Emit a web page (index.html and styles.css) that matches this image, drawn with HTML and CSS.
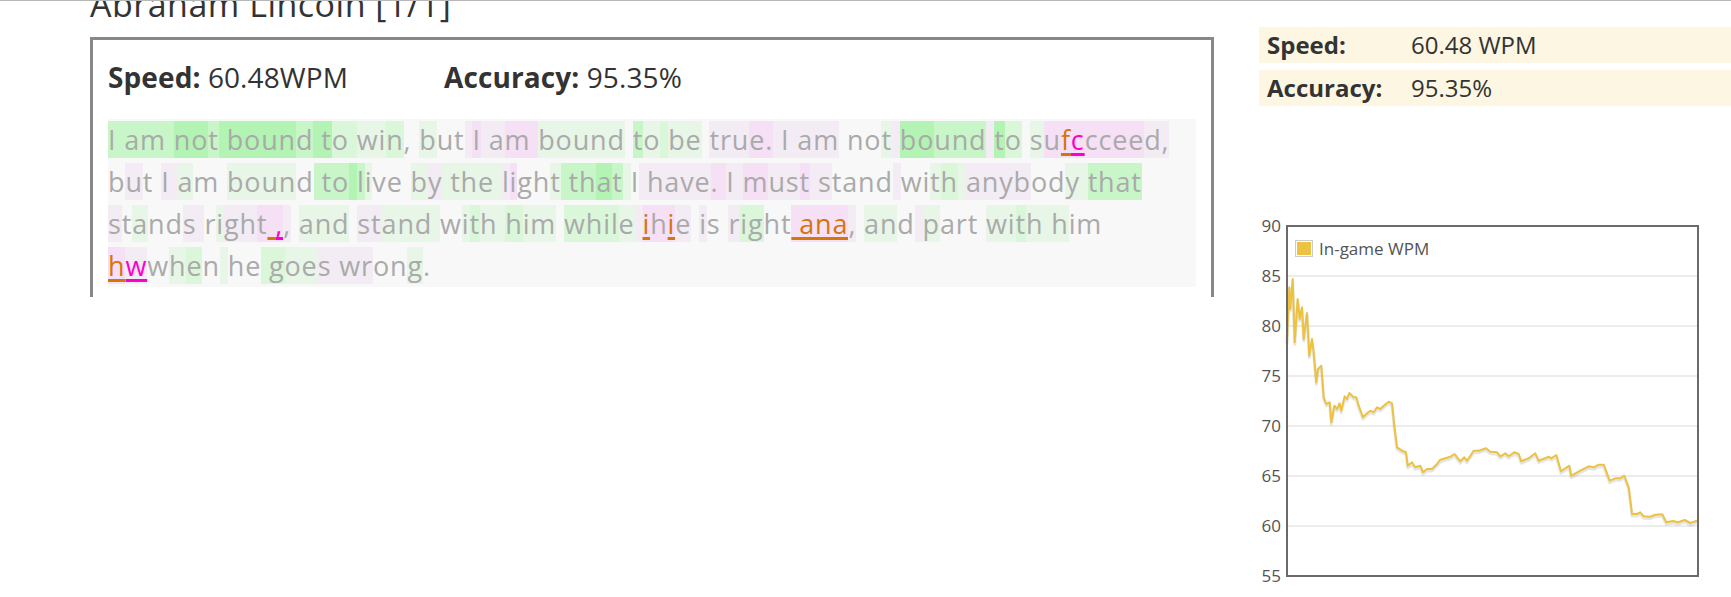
FILE: index.html
```html
<!DOCTYPE html>
<html>
<head>
<meta charset="utf-8">
<link rel="stylesheet" href="styles.css">
</head>
<body>
<div class="page">
  <div class="main">
    <h1 class="title">Abraham Lincoln [1/1]</h1>
    <div class="box">
      <div class="stats">
        <div class="stat stat-speed"><b>Speed:</b> 60.48WPM</div>
        <div class="stat"><b>Accuracy:</b> 95.35%</div>
      </div>
      <div class="passage"><span class="b">I am </span><span class="a">no</span><span class="b">t</span><span class="a"> boun</span><span class="b">d</span><span class="a"> t</span><span class="c">o </span><span class="d">wi</span><span class="c">n</span>, <span class="d">b</span>ut<span class="q"> </span><span class="p">I</span><span class="q"> a</span><span class="p">m </span><span class="d">bound</span> <span class="b">t</span><span class="d">o</span><span class="c"> </span><span class="d">be</span> <span class="q">tru</span><span class="p">e.</span><span class="q"> I am</span> no<span class="d">t</span><span class="q"> </span><span class="a">bo</span><span class="b">und</span><span class="q"> </span><span class="a">t</span><span class="c">o</span> <span class="d">s</span><span class="p">u</span><span class="p e1">f</span><span class="p e2">c</span><span class="p">ccee</span><span class="q">d,</span><br>b<span class="q">u</span>t <span class="q">I </span><span class="d">a</span>m <span class="d">boun</span>d<span class="b"> to</span><span class="a"> </span><span class="b">l</span><span class="d">i</span>ve <span class="d">b</span><span class="q">y</span><span class="d"> the </span><span class="q">l</span><span class="p">i</span>gh<span class="d">t</span><span class="b"> th</span><span class="a">a</span><span class="b">t</span><span class="d"> </span>I<span class="q"> have</span><span class="p">. </span><span class="q">I </span><span class="p">m</span><span class="q">us</span><span class="p">t</span><span class="q"> s</span>tand<span class="q"> </span>wi<span class="d">t</span><span class="c">h</span><span class="d"> </span><span class="q">anyb</span>od<span class="d">y </span><span class="b">that</span><br><span class="q">s</span>t<span class="d">a</span>nd<span class="q">s </span>r<span class="d">i</span><span class="q">gh</span><span class="p">t</span><span class="p e1"> </span><span class="p e2">,</span><span class="q">,</span> <span class="d">and</span> <span class="q">st</span><span class="d">and </span>w<span class="d">i</span><span class="c">t</span><span class="d">h </span><span class="c">h</span><span class="d">im</span> <span class="c">whil</span><span class="d">e</span><span class="q"> </span><span class="p e1">i</span><span class="p">h</span><span class="p e1">i</span><span class="q">e</span> <span class="q">i</span>s <span class="q">r</span><span class="c">ig</span>ht<span class="p e1"> ana</span><span class="q">,</span> <span class="d">an</span>d<span class="q"> </span><span class="d">p</span>art <span class="d">wi</span><span class="c">t</span><span class="d">h h</span>im<br><span class="p e1">h</span><span class="q e2">w</span>w<span class="d">h</span><span class="c">e</span>n<span class="d"> </span>he<span class="c"> g</span><span class="d">oe</span><span class="q">s wr</span>on<span class="d">g</span>.</div>
    </div>
  </div>
  <div class="side">
    <div class="row"><span class="lbl">Speed:</span><span class="val">60.48 WPM</span></div>
    <div class="row"><span class="lbl">Accuracy:</span><span class="val">95.35%</span></div>
    <svg class="chart" width="472" height="376" viewBox="0 0 472 376">
      <g class="grid">
        <line x1="28" y1="62" x2="439" y2="62"/>
        <line x1="28" y1="112" x2="439" y2="112"/>
        <line x1="28" y1="162" x2="439" y2="162"/>
        <line x1="28" y1="212" x2="439" y2="212"/>
        <line x1="28" y1="262" x2="439" y2="262"/>
        <line x1="28" y1="312" x2="439" y2="312"/>
      </g>
      <g class="ticks">
        <text x="22" y="18">90</text>
        <text x="22" y="68">85</text>
        <text x="22" y="118">80</text>
        <text x="22" y="168">75</text>
        <text x="22" y="218">70</text>
        <text x="22" y="268">65</text>
        <text x="22" y="318">60</text>
        <text x="22" y="368">55</text>
      </g>
      <g transform="translate(28,12)">
        <path class="shadow" transform="translate(0,2)" d="M0,116.3 L2.3,61.3 L3.3,83 L5.7,53 L7.7,116.3 L10.7,73 L12.7,93 L15,81.3 L16.7,113 L20,87 L22.3,129.7 L25,113 L26.7,126.3 L29.3,156.3 L31,143 L34.3,139.7 L36.7,171.3 L39.3,178 L42.7,176.3 L44.3,196.3 L47.3,179.7 L50,183 L52.7,177.3 L54.3,184.7 L57.7,170.3 L60,173 L62.3,167 L66.7,171.3 L69.3,171.3 L71.7,179.7 L76,191.3 L80,187.3 L83.3,184.7 L86.7,186.3 L90,181.3 L93.3,183 L96.7,179.7 L101.7,175.7 L105,177.3 L107.3,199.7 L110,221.3 L115,224.7 L119,226.3 L120.7,239.7 L125,236.3 L128.3,241.3 L133.3,239.7 L136,246.3 L140,243 L145,243 L150,238 L153.3,233.7 L158.3,232.3 L163.3,230.7 L167.7,228 L173.3,235.3 L177.3,231.3 L180,234.7 L186.7,224.7 L191.7,224.7 L199,222.3 L203.3,225.7 L210,226.3 L213.3,230.3 L218.3,227.3 L221.7,230.3 L227.3,226.3 L231.7,228 L234.3,235.3 L241.7,232.3 L248.3,227.3 L251.7,234.7 L261.7,230.7 L264.3,232.3 L269.3,229 L274,245.3 L278.3,242.3 L282.3,239.7 L284.3,249.7 L293.3,244.7 L301.7,240.3 L306.7,241.3 L311.7,238.7 L316.7,238.7 L322.7,254.7 L328.3,252.3 L333.3,252.3 L337.3,249.7 L341.7,261.3 L345,288 L350,288 L353.3,286.3 L356.7,290.3 L363.3,290.7 L368.3,288.7 L375.3,288.3 L379.3,296.3 L386,295 L391,296.3 L397.7,294 L403.3,297 L410,294.7"/>
        <path class="series" d="M0,116.3 L2.3,61.3 L3.3,83 L5.7,53 L7.7,116.3 L10.7,73 L12.7,93 L15,81.3 L16.7,113 L20,87 L22.3,129.7 L25,113 L26.7,126.3 L29.3,156.3 L31,143 L34.3,139.7 L36.7,171.3 L39.3,178 L42.7,176.3 L44.3,196.3 L47.3,179.7 L50,183 L52.7,177.3 L54.3,184.7 L57.7,170.3 L60,173 L62.3,167 L66.7,171.3 L69.3,171.3 L71.7,179.7 L76,191.3 L80,187.3 L83.3,184.7 L86.7,186.3 L90,181.3 L93.3,183 L96.7,179.7 L101.7,175.7 L105,177.3 L107.3,199.7 L110,221.3 L115,224.7 L119,226.3 L120.7,239.7 L125,236.3 L128.3,241.3 L133.3,239.7 L136,246.3 L140,243 L145,243 L150,238 L153.3,233.7 L158.3,232.3 L163.3,230.7 L167.7,228 L173.3,235.3 L177.3,231.3 L180,234.7 L186.7,224.7 L191.7,224.7 L199,222.3 L203.3,225.7 L210,226.3 L213.3,230.3 L218.3,227.3 L221.7,230.3 L227.3,226.3 L231.7,228 L234.3,235.3 L241.7,232.3 L248.3,227.3 L251.7,234.7 L261.7,230.7 L264.3,232.3 L269.3,229 L274,245.3 L278.3,242.3 L282.3,239.7 L284.3,249.7 L293.3,244.7 L301.7,240.3 L306.7,241.3 L311.7,238.7 L316.7,238.7 L322.7,254.7 L328.3,252.3 L333.3,252.3 L337.3,249.7 L341.7,261.3 L345,288 L350,288 L353.3,286.3 L356.7,290.3 L363.3,290.7 L368.3,288.7 L375.3,288.3 L379.3,296.3 L386,295 L391,296.3 L397.7,294 L403.3,297 L410,294.7"/>
      </g>
      <rect class="frame" x="28" y="12" width="411" height="350"/>
      <rect class="legend-box" x="36.5" y="26.5" width="17" height="16"/>
      <rect class="legend-swatch" x="38" y="28" width="14" height="13"/>
      <text class="legend-text" x="60" y="40.5">In-game WPM</text>
    </svg>
  </div>
</div>
</body>
</html>
```

FILE: styles.css
```css
html, body {
  margin: 0;
  padding: 0;
  background: #fff;
}
body {
  font-family: "Open Sans", "Noto Sans", sans-serif;
  color: #333;
  border-top: 1px solid #b8b8b8;
  overflow: hidden;
  height: 596px;
}
.page {
  display: flex;
  padding-left: 90px;
  gap: 45px;
}
.main {
  width: 1124px;
  flex: none;
}
.title {
  margin: -17px 0 13px 0;
  font-size: 34px;
  line-height: 40px;
  font-weight: normal;
  letter-spacing: 0.5px;
  color: #333;
}
.box {
  border: 3px solid #888;
  border-bottom: 0;
  height: 257px;
  padding: 0 15px;
}
.stats {
  display: flex;
  font-size: 28px;
  line-height: 40px;
  margin: 17px 0 22px 0;
  color: #333;
  letter-spacing: 0.1px;
}
.stat b {
  font-weight: bold;
}
.stat-speed {
  width: 336px;
}
.passage {
  background: #f8f8f8;
  font-size: 27px;
  line-height: 42px;
  color: #aaa;
  letter-spacing: 0.85px;
  white-space: nowrap;
}
.a { background: #b3f3b3; }
.b { background: #c8f6c8; }
.c { background: #daf7da; }
.d { background: #e8f6e8; }
.p { background: #f6e0f6; }
.q { background: #f4ecf5; }
.e1 {
  color: #d4760a;
  text-decoration: underline;
  text-decoration-color: #d4760a;
  text-decoration-thickness: 3px;
  text-underline-offset: 3px;
  text-decoration-skip-ink: none;
}
.e2 {
  color: #ff00cc;
  text-decoration: underline;
  text-decoration-color: #ff00cc;
  text-decoration-thickness: 3px;
  text-underline-offset: 3px;
  text-decoration-skip-ink: none;
}
.side {
  flex: 1;
  padding-top: 26px;
}
.row {
  display: flex;
  align-items: center;
  height: 36px;
  background: #fcf6e2;
  margin-bottom: 7px;
  font-size: 24px;
  line-height: 36px;
  color: #333;
}
.lbl {
  width: 144px;
  padding-left: 8px;
  font-weight: bold;
}
.chart {
  display: block;
  margin-top: 108px;
}
.grid line {
  stroke: #dadada;
  stroke-width: 1.2;
}
.ticks text {
  font-family: "Open Sans", sans-serif;
  font-size: 17px;
  fill: #545454;
  text-anchor: end;
}
.series {
  fill: none;
  stroke: #edc240;
  stroke-width: 2;
  stroke-linejoin: round;
}
.shadow {
  fill: none;
  stroke: rgba(0, 0, 0, 0.1);
  stroke-width: 3;
  stroke-linejoin: round;
}
.frame {
  fill: none;
  stroke: #6a6a6a;
  stroke-width: 2;
}
.legend-box {
  fill: #fff;
  stroke: #ccc;
  stroke-width: 1;
}
.legend-swatch {
  fill: #edc240;
}
.legend-text {
  font-family: "Open Sans", sans-serif;
  font-size: 17px;
  fill: #545454;
}
```
